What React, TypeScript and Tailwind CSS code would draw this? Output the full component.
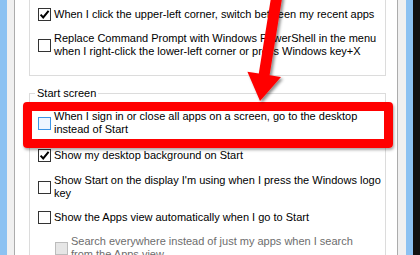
import type { ReactNode } from 'react';

type BoxState = 'off' | 'on' | 'hover' | 'disabled';

function Box({ state }: { state: BoxState }) {
    const cls =
        state === 'hover'
            ? 'border-[#3c95e6] bg-[#eef6ff]'
            : state === 'disabled'
              ? 'border-[#bcbcbc] bg-[#e6e6e6]'
              : 'border-[#333333] bg-white';
    return (
        <div className={`w-[13px] h-[13px] shrink-0 border ${cls} flex items-center justify-center`}>
            {state === 'on' && (
                <svg width="11" height="11" viewBox="0 0 11 11">
                    <path d="M1.6 5.6 L4.2 8.4 L9.6 1.8" fill="none" stroke="#000" strokeWidth="2" />
                </svg>
            )}
        </div>
    );
}

function Option({ state, children, indent = false }: { state: BoxState; children: ReactNode; indent?: boolean }) {
    return (
        <div className={`flex items-center gap-[3px] ${indent ? 'pl-[17px]' : ''}`}>
            <Box state={state} />
            <div
                className={`whitespace-nowrap leading-[13px] ${state === 'disabled' ? 'text-[#6d6d6d]' : 'text-black'}`}
            >
                {children}
            </div>
        </div>
    );
}

export default function App() {
    return (
        <div
            className="relative flex w-[420px] h-[255px] overflow-hidden bg-white text-[11px]"
            style={{ fontFamily: '"Liberation Sans", Arial, sans-serif' }}
        >
            {/* left window edge */}
            <div className="w-[7px] bg-[#8cc2f2]" />
            <div className="w-[7px] bg-[#f0f0f0]" />
            <div className="w-px bg-[#acacac]" />

            {/* dialog body */}
            <div className="flex-1 flex flex-col pl-[14px] pr-[11px]">
                {/* upper group, top edge scrolled off */}
                <div className="border border-t-0 border-[#dcdcdc] pl-[8px] pt-[8px] pb-[17px] flex flex-col gap-[11px]">
                    <Option state="on">When I click the upper-left corner, switch between my recent apps</Option>
                    <Option state="off">
                        Replace Command Prompt with Windows PowerShell in the menu
                        <br />
                        when I right-click the lower-left corner or press Windows key+X
                    </Option>
                </div>

                <fieldset className="mt-[10px] border border-[#dcdcdc] flex-1">
                    <legend className="ml-[5px] px-[2px] leading-[14px] text-black">Start screen</legend>
                    <div className="pl-[8px] pt-[10px] flex flex-col">
                        <Option state="hover">
                            When I sign in or close all apps on a screen, go to the desktop
                            <br />
                            instead of Start
                        </Option>
                        <div className="mt-[13px]">
                            <Option state="on">Show my desktop background on Start</Option>
                        </div>
                        <div className="mt-[12px]">
                            <Option state="off">
                                Show Start on the display I'm using when I press the Windows logo
                                <br />
                                key
                            </Option>
                        </div>
                        <div className="mt-[11px]">
                            <Option state="off">Show the Apps view automatically when I go to Start</Option>
                        </div>
                        <div className="mt-[11px]">
                            <Option state="disabled" indent>
                                Search everywhere instead of just my apps when I search
                                <br />
                                from the Apps view
                            </Option>
                        </div>
                    </div>
                </fieldset>
            </div>

            {/* right window edge + desktop */}
            <div className="w-px bg-[#acacac]" />
            <div className="w-[8px] bg-[#f0f0f0]" />
            <div className="w-[7px] bg-[#8cc2f2]" />
            <div className="w-[7px] bg-[#121212]" />

            {/* annotation: red highlight box */}
            <div className="absolute left-[23px] top-[102px] w-[370px] h-[46px] border-[9px] border-[#ff0000] rounded-[4px] shadow-[1px_2px_3px_rgba(0,0,0,0.35)]" />

            {/* annotation: red arrow */}
            <svg className="absolute left-0 top-0 pointer-events-none" width="420" height="255" viewBox="0 0 420 255">
                <defs>
                    <filter id="arrowShadow" x="-20%" y="-20%" width="140%" height="140%">
                        <feDropShadow dx="2" dy="2" stdDeviation="1.6" floodColor="#000" floodOpacity="0.45" />
                    </filter>
                </defs>
                <polygon
                    points="271.6,-6 282.4,-4 269.6,75.3 281,77 260,101 247.4,71.7 258.8,73.5"
                    fill="#ff0000"
                    filter="url(#arrowShadow)"
                />
            </svg>
        </div>
    );
}
